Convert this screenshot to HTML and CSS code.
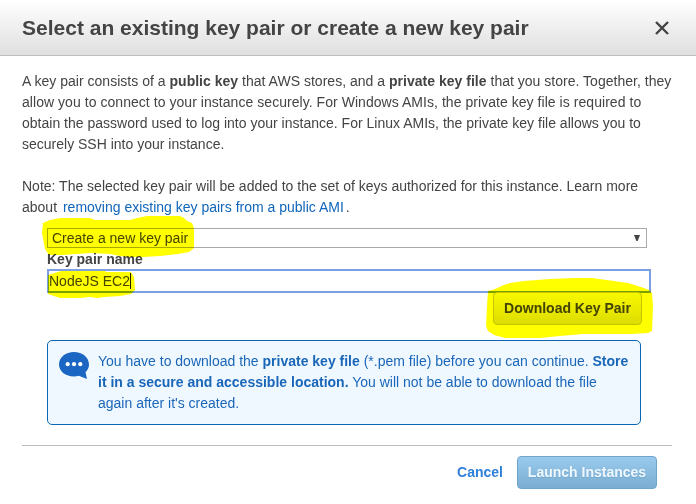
FILE: index.html
```
<!DOCTYPE html>
<html lang="en">
<head>
<meta charset="utf-8">
<title>Select an existing key pair or create a new key pair</title>
<link rel="stylesheet" href="styles.css">
</head>
<body>
<main class="dialog">
  <header class="header">
    <h1>Select an existing key pair or create a new key pair</h1>
    <svg class="close" viewBox="0 0 14 14"><path d="M1 1 L13 13 M13 1 L1 13"/></svg>
  </header>
  <section class="body">
    <p class="copy"><span class="l1">A key pair consists of a <b>public key</b> that AWS stores, and a <b>private key file</b> that you store. Together, they</span><br><span class="l2">allow you to connect to your instance securely. For Windows AMIs, the private key file is required to</span><br><span class="l3">obtain the password used to log into your instance. For Linux AMIs, the private key file allows you to</span><br><span class="l4">securely SSH into your instance.</span></p>
    <p class="copy"><span class="l5">Note: The selected key pair will be added to the set of keys authorized for this instance. Learn more</span><br><span class="l6">about <a class="link">removing existing key pairs from a public AMI</a>.</span></p>
    <div class="form">
      <div class="select"><span>Create a new key pair</span><svg class="arrow" viewBox="0 0 6 6"><path d="M0 0H6L3.6 6H2.4Z"/></svg></div>
      <label class="label"><span>Key pair name</span></label>
      <div class="input"><span>NodeJS EC2</span><i class="caret"></i></div>
      <div class="download"><span>Download Key Pair</span></div>
      <div class="notice">
        <svg class="bubble" viewBox="0 0 30 28"><path d="M15 0C23.300 0 30 5.400 30 12.500C30 15.500 28.700 18 26.500 20.200L28 27L19.800 23.800C18.300 24.300 16.700 24.500 15 24.500C6.700 24.500 0 19.500 0 12.500C0 5.400 6.700 0 15 0Z"/><g><circle cx="8.700" cy="12.200" r="2.100"/><circle cx="15" cy="12.200" r="2.100"/><circle cx="21.300" cy="12.200" r="2.100"/></g></svg>
        <p><span class="n1">You have to download the <b>private key file</b> (*.pem file) before you can continue. <b>Store</b></span><br><span class="n2"><b>it in a secure and accessible location.</b> You will not be able to download the file</span><br><span class="n3">again after it's created.</span></p>
      </div>
    </div>
  </section>
  <footer class="footer">
    <a class="cancel"><span>Cancel</span></a>
    <div class="launch"><span>Launch Instances</span></div>
  </footer>
  <svg class="marker" viewBox="0 0 696 504">
    <path d="M43 223L50 220L60 218L90 218L95 220H130L137 218L147 216H180L184 218L187 221L192 223L194 228V248L189 252L178 254L160 256L143 257H129L120 256L110 254L90 253L63 255H49L45 249L42 233Z"/>
    <path d="M48 275L61 271H105L106 272H131L134 277L135 290L131 294L120 296L105 297L97 298L90 297L80 298L60 298L54 296L48 294Z"/>
    <path d="M488 291L495 289L504 285L510 283L524 281L550 279L575 278H592L614 281L628 283L641 287L649 290L652 293L653 306L652 331L648 333L632 334L583 334L560 336L540 338H505L494 335L488 331L486 326L487 306Z"/>
  </svg>
</main>
</body>
</html>
```
FILE: styles.css
```
* { box-sizing: border-box; }
body { margin: 0; background: #fff; color: #444; font: 14px/21px "Liberation Sans", Arial, sans-serif; }
.dialog { position: relative; width: 696px; height: 504px; overflow: hidden; }
.dialog span { white-space: nowrap; }
p, h1 { margin: 0; }
.header { display: flex; align-items: center; justify-content: space-between; height: 56px; padding: 0 27px 0 22px; border-bottom: 1px solid #bfbfbf; background: linear-gradient(#fff, #dfdfdf); }
h1 { font-size: 21px; line-height: 24px; }
.close { width: 14px; height: 14px; margin-top: 1px; fill: none; stroke: #444; stroke-width: 2.4; }
.body { padding: 15px 22px 0; }
.l1 { letter-spacing: 0.017px; }
.l2 { letter-spacing: 0.047px; }
.l3 { letter-spacing: 0.01px; }
.copy { margin-bottom: 21px; }
.copy + .copy { margin-bottom: 10px; }
.link { margin-left: 2px; margin-right: 2px; color: #1166bb; }
.form { margin-left: 25px; width: 604px; }
.select { display: flex; align-items: center; justify-content: space-between; width: 600px; height: 20px; padding: 0 6px 0 4px; border: 1px solid #a9a9a9; }
.arrow { width: 6px; height: 6px; margin-top: -1px; fill: #444; }
.label { display: block; height: 21px; line-height: 22px; font-weight: bold; }
.input { display: flex; align-items: center; height: 24px; border: 2px solid #7b9fe0; }
.caret { width: 1px; height: 16px; background: #222; }
.download { display: flex; align-items: center; justify-content: center; width: 149px; height: 33px; margin: -1px 0 0 446px; border: 1px solid #c4c4c4; border-radius: 4px; background: linear-gradient(#f8f8f8, #dddddd); font-weight: bold; }
.notice { display: flex; width: 594px; height: 85px; margin-top: 15px; padding: 10px 0 0 11px; border: 1px solid #0c66b3; border-radius: 5px; background: #f0f8ff; color: #1a66b8; }
.bubble { flex: none; width: 30px; height: 28px; margin: 1px 9px 0 0; fill: #1a66c2; }
.bubble g { fill: #fff; }
.footer { display: flex; align-items: center; justify-content: flex-end; height: 54px; margin: 20px 24px 0 22px; padding: 0 15px 0 0; border-top: 1px solid #bbb; font-weight: bold; }
.cancel { margin-right: 14px; color: #2f7fdb; }
.launch { display: flex; align-items: center; justify-content: center; width: 140px; height: 33px; border: 1px solid #6fa5cd; border-radius: 4px; background: linear-gradient(#9acbee, #7aadd1); color: #f0f8ff; text-shadow: 0 1px 1px #73a7cc; }
.marker { position: absolute; inset: 0; width: 696px; height: 504px; fill: #ff0; mix-blend-mode: multiply; pointer-events: none; }
```
